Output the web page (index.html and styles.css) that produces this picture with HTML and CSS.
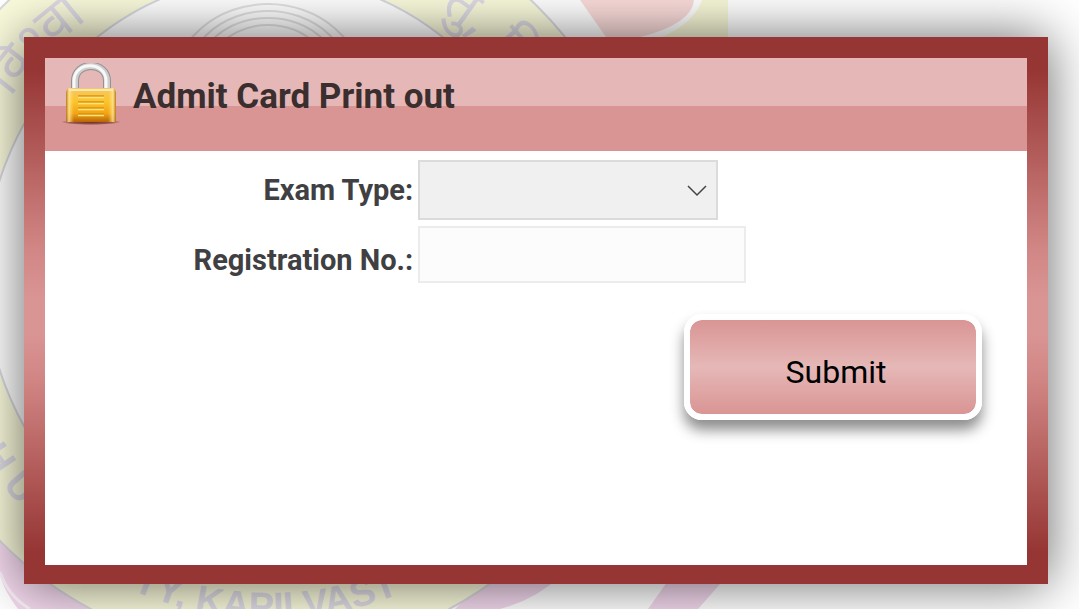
FILE: index.html
```html
<!DOCTYPE html>
<html lang="en">

<head>
    <meta charset="UTF-8">
    <meta name="viewport" content="width=device-width, initial-scale=1.0">
    <title>Admit Card Print out</title>
    <link rel="stylesheet" href="styles.css">
</head>

<body>
    <!-- University seal behind the panel -->
    <svg class="seal" viewBox="0 0 1079 609" preserveAspectRatio="xMinYMin slice" aria-hidden="true">
        <defs>
            <path id="ring-left" d="M-70 275A340 340 0 0 0 610 275" />
            <path id="ring-bottom" d="M-74 275A344 344 0 0 0 614 275" />
            <path id="ring-top" d="M-44 275A314 314 0 0 1 584 275" />
        </defs>
        <path fill="#f3d8ed" d="M0 530L60 560L125 609H18Q0 585 0 570zM455 609L490 575H562Q535 600 500 609zM648 609L672 575H728L698 609z" />
        <path fill="none" stroke="#faf0f8" stroke-width="3" d="M0 572Q8 596 30 609" />
        <path fill="#f8f8d8" d="M702 0H728V50H620Q690 35 702 0z" />
        <path fill="#fadcda" d="M580 0H694Q692 24 640 37H606z" />
        <circle cx="270" cy="275" r="379" fill="#fafadc" stroke="#d8d8de" stroke-width="2" />
        <ellipse cx="270" cy="275" rx="285" ry="299" fill="#fff" stroke="#d8d8e0" stroke-width="2" />
        <g fill="none" stroke="#e4e0e0" stroke-width="2">
            <ellipse cx="268" cy="90" rx="96" ry="86" />
            <ellipse cx="268" cy="90" rx="86" ry="79" />
            <ellipse cx="268" cy="90" rx="78" ry="72" />
            <ellipse cx="268" cy="90" rx="68" ry="65" />
        </g>
        <text class="ring-text"><textPath href="#ring-bottom" startOffset="398">TY, KAPILVAST</textPath></text>
        <text class="ring-text"><textPath href="#ring-left" startOffset="188">H U</textPath></text>
        <text class="ring-text ring-text-top"><textPath href="#ring-top" startOffset="188">विश्वा</textPath></text>
        <text class="ring-text ring-text-top"><textPath href="#ring-top" startOffset="672">तु, कि</textPath></text>
    </svg>

    <main class="panel">
        <div class="panel-inner">
            <header class="panel-header">
                <svg class="lock" viewBox="0 0 60 64" aria-hidden="true">
                    <defs>
                        <linearGradient id="gold" x1="0" y1="0" x2="0" y2="1">
                            <stop offset="0" stop-color="#f6c768" />
                            <stop offset="0.4" stop-color="#fbc42c" />
                            <stop offset="0.75" stop-color="#f2a414" />
                            <stop offset="1" stop-color="#b86408" />
                        </linearGradient>
                        <linearGradient id="edge" x1="0" y1="0" x2="1" y2="0">
                            <stop offset="0" stop-color="#b06a10" stop-opacity="0.8" />
                            <stop offset="0.06" stop-color="#ffe9a0" stop-opacity="0.8" />
                            <stop offset="0.16" stop-color="#ffd860" stop-opacity="0" />
                            <stop offset="0.84" stop-color="#ffd860" stop-opacity="0" />
                            <stop offset="0.94" stop-color="#ffe9a0" stop-opacity="0.8" />
                            <stop offset="1" stop-color="#b06a10" stop-opacity="0.8" />
                        </linearGradient>
                        <radialGradient id="floor">
                            <stop offset="0" stop-color="#6b2c20" />
                            <stop offset="0.7" stop-color="#6b2c20" stop-opacity="0.6" />
                            <stop offset="1" stop-color="#6b2c20" stop-opacity="0" />
                        </radialGradient>
                    </defs>
                    <ellipse cx="30" cy="59" rx="30" ry="3" fill="url(#floor)" />
                    <path d="M14 30V18C14 -2 46 -2 46 18V30" fill="none" stroke="#929292" stroke-width="8" />
                    <path d="M14 30V18C14 -2 46 -2 46 18V30" fill="none" stroke="#cecece" stroke-width="6" />
                    <path d="M13 30V17C14 -2 44 -2 45 17V30" fill="none" stroke="#f8f8f8" stroke-width="3" />
                    <path d="M7 25H53L55 29V59H5V29z" fill="url(#gold)" />
                    <path d="M7 25H53L55 29V59H5V29z" fill="url(#edge)" />
                    <path d="M8 27H52" stroke="#fde9b0" stroke-width="2" />
                    <path d="M17 33H43M17 39H43M17 45H43M17 51H43" stroke="#d9920f" stroke-width="1.5" />
                    <path d="M17 34.5H43M17 40.5H43M17 46.5H43M17 52.5H43" stroke="#ffe37a" stroke-width="1.5" />
                </svg>
                <h1>Admit Card Print out</h1>
            </header>

            <form class="admit-form">
                <label for="exam-type">Exam Type:</label>
                <div class="select-box">
                    <select id="exam-type">
                        <option value=""></option>
                    </select>
                    <svg class="arrow" viewBox="0 0 20 12" aria-hidden="true">
                        <path d="M1 1L10 10L19 1" />
                    </svg>
                </div>

                <label for="reg-no">Registration No.:</label>
                <input type="text" id="reg-no">

                <button class="submit-button" type="button">Submit</button>
            </form>
        </div>
    </main>
</body>

</html>
```
FILE: styles.css
```css
* {
    box-sizing: border-box;
}

body {
    font-family: Roboto, Arial, sans-serif;
    margin: 0;
    padding: 37px 31px 25px 24px;
    color: #404043;
    background-color: #fff;
    position: relative;
    overflow-x: hidden;
}

/* Faded seal */
.seal {
    position: absolute;
    top: 0;
    left: 0;
    width: 100%;
    height: 100%;
}

.ring-text {
    font-family: "Liberation Sans", sans-serif;
    font-size: 38px;
    font-weight: bold;
    fill: #dedbe4;
}

.ring-text-top {
    font-family: "Noto Sans", sans-serif;
    font-size: 54px;
    font-weight: normal;
}

/* Panel */
.panel {
    position: relative;
    padding: 21px 21px 19px;
    background: linear-gradient(#963634, #963634 6%, #d08583 38%, #d99594 48%, #d99594 54%, #d08583 63%, #963634 94%);
    box-shadow: 0 0 50px rgba(0, 0, 0, 0.6);
}

.panel-inner {
    background-color: #fff;
}

.panel-header {
    display: flex;
    align-items: center;
    height: 93px;
    padding: 0 16px 16px;
    gap: 12px;
    background: linear-gradient(#e5b8b7 52%, #d99594 52%);
}

.lock {
    width: 60px;
    height: 64px;
    margin-bottom: 4px;
}

h1 {
    margin: 0;
    font-size: 35px;
    line-height: 40px;
    color: #3a2e2f;
}

/* Form */
.admit-form {
    display: grid;
    grid-template-columns: 38% 1fr;
    row-gap: 6px;
    padding: 9px 0 145px;
}

label {
    padding-right: 5px;
    font-size: 29px;
    line-height: 60px;
    font-weight: bold;
    text-align: right;
}

label[for="reg-no"] {
    line-height: 68px;
}

.select-box {
    position: relative;
    width: 300px;
}

select,
input {
    display: block;
    margin: 0;
    padding: 0 12px;
    border-radius: 0;
    font: inherit;
    font-size: 29px;
    color: inherit;
}

select {
    appearance: none;
    width: 100%;
    height: 60px;
    border: 2px solid #dadcdc;
    background-color: #f0f0f0;
}

input {
    width: 328px;
    height: 57px;
    border: 2px solid #ececec;
    background-color: #fcfcfc;
}

.arrow {
    position: absolute;
    top: 25px;
    right: 11px;
    width: 20px;
    height: 12px;
    fill: none;
    stroke: #444;
    stroke-width: 1.5;
    pointer-events: none;
}

.submit-button {
    grid-column: 2;
    justify-self: end;
    width: 298px;
    height: 106px;
    margin: 14px 45px 0 0;
    padding: 10px 0 0 6px;
    border: 6px solid #fff;
    border-radius: 18px;
    background: linear-gradient(#d99594, #e5b8b7 50%, #d99594) padding-box;
    box-shadow: 0 10px 14px rgba(0, 0, 0, 0.45);
    font-family: inherit;
    font-size: 32px;
    color: #000;
    cursor: pointer;
}
```
